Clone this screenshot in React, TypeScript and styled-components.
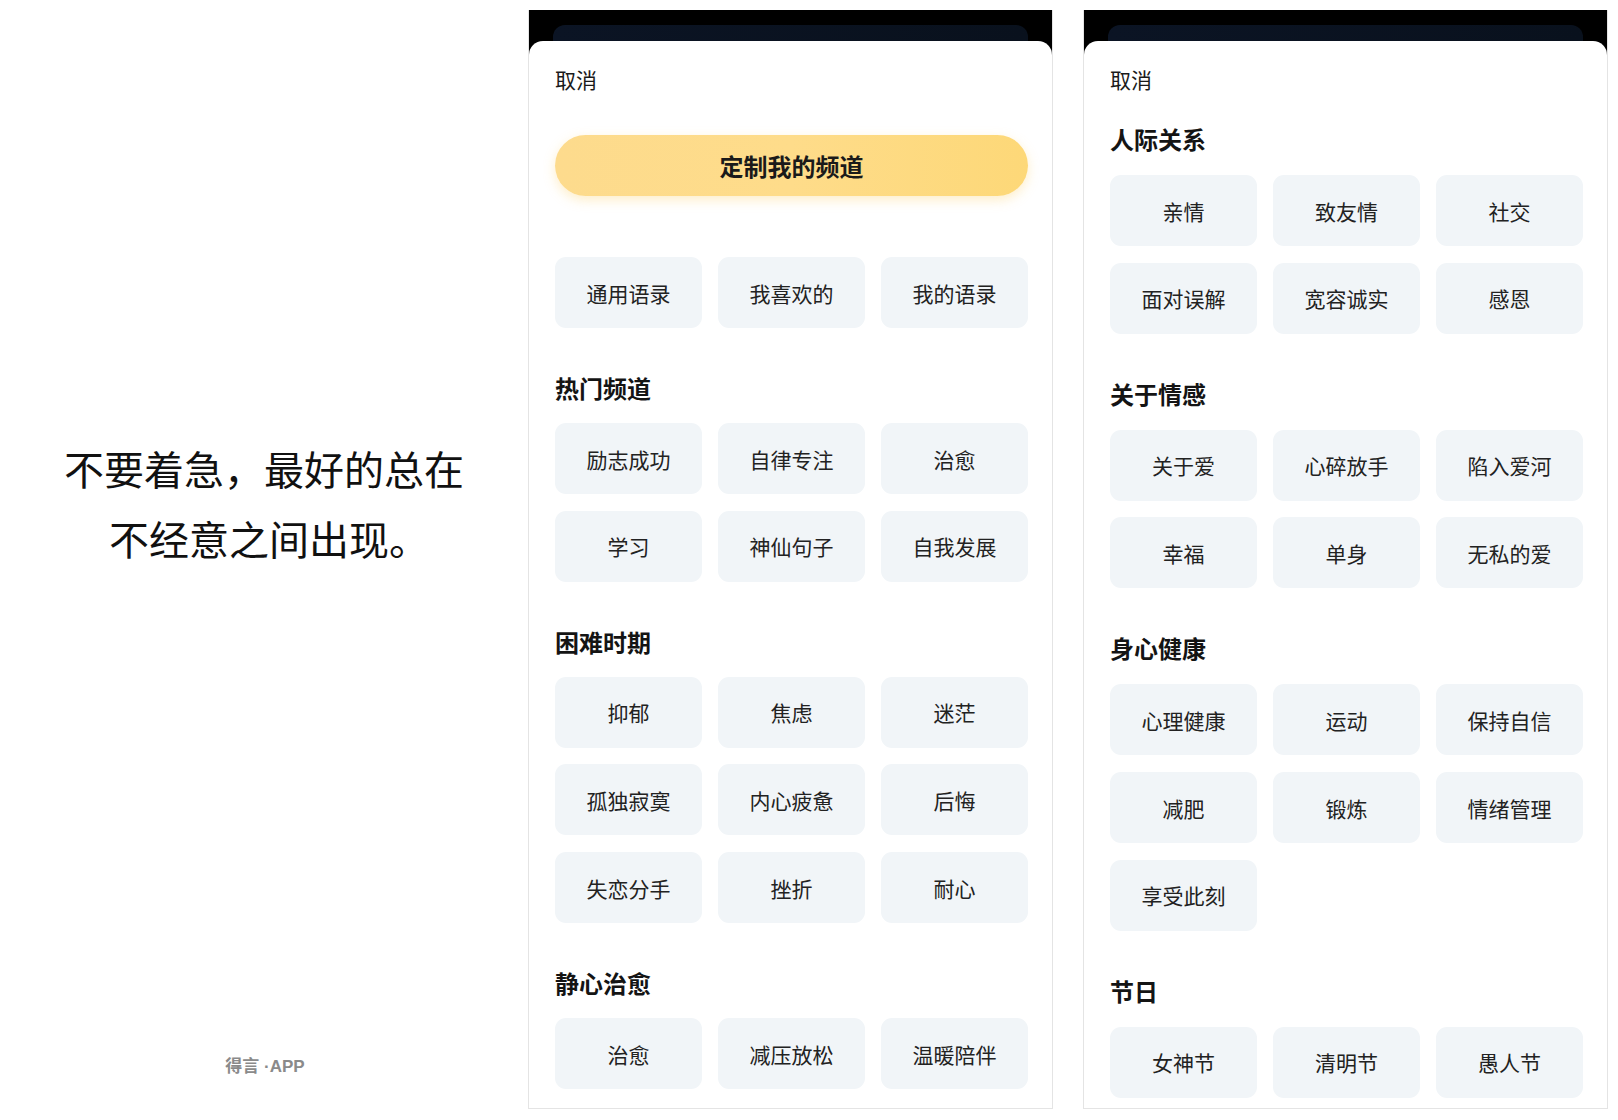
import React from 'react';
import styled, { createGlobalStyle } from 'styled-components';

const GlobalStyle = createGlobalStyle`
  html, body {
    margin: 0;
    padding: 0;
    background: #ffffff;
    font-family: "PingFang SC", "Noto Sans CJK SC", "Noto Sans", sans-serif;
    color: #1a1a1a;
  }
`;

type Section = { title: string; items: string[] };

const hotSections: Section[] = [
  { title: '热门频道', items: ['励志成功', '自律专注', '治愈', '学习', '神仙句子', '自我发展'] },
  { title: '困难时期', items: ['抑郁', '焦虑', '迷茫', '孤独寂寞', '内心疲惫', '后悔', '失恋分手', '挫折', '耐心'] },
  { title: '静心治愈', items: ['治愈', '减压放松', '温暖陪伴'] },
];

const moreSections: Section[] = [
  { title: '人际关系', items: ['亲情', '致友情', '社交', '面对误解', '宽容诚实', '感恩'] },
  { title: '关于情感', items: ['关于爱', '心碎放手', '陷入爱河', '幸福', '单身', '无私的爱'] },
  { title: '身心健康', items: ['心理健康', '运动', '保持自信', '减肥', '锻炼', '情绪管理', '享受此刻'] },
  { title: '节日', items: ['女神节', '清明节', '愚人节'] },
];

const App: React.FC = () => {
  return (
    <>
      <GlobalStyle />
      <Page>
        <Intro>
          <Quote>
            不要着急，最好的总在
            <br />
            <Shift>不经意之间出现。</Shift>
          </Quote>
          <Brand>得言 ·APP</Brand>
        </Intro>

        <Frame>
          <PeekCard />
          <Sheet>
            <Cancel>取消</Cancel>
            <CustomButton>定制我的频道</CustomButton>
            <ChipGrid $top={61}>
              <Chip>通用语录</Chip>
              <Chip>我喜欢的</Chip>
              <Chip>我的语录</Chip>
            </ChipGrid>
            {hotSections.map((s) => (
              <Group key={s.title} $top={45}>
                <GroupTitle>{s.title}</GroupTitle>
                <ChipGrid $top={20}>
                  {s.items.map((it, i) => (
                    <Chip key={i}>{it}</Chip>
                  ))}
                </ChipGrid>
              </Group>
            ))}
          </Sheet>
        </Frame>

        <Frame>
          <PeekCard />
          <Sheet>
            <Cancel>取消</Cancel>
            {moreSections.map((s, idx) => (
              <Group key={s.title} $top={idx === 0 ? 31 : 45}>
                <GroupTitle>{s.title}</GroupTitle>
                <ChipGrid $top={21}>
                  {s.items.map((it, i) => (
                    <Chip key={i}>{it}</Chip>
                  ))}
                </ChipGrid>
              </Group>
            ))}
          </Sheet>
        </Frame>
      </Page>
    </>
  );
};

export default App;

const Page = styled.div`
  display: flex;
  align-items: flex-start;
  width: 1618px;
  height: 1120px;
  overflow: hidden;
`;

const Intro = styled.div`
  width: 528px;
  height: 1120px;
  display: flex;
  flex-direction: column;
  align-items: center;
  padding-top: 433px;
  padding-bottom: 43px;
  box-sizing: border-box;
`;

const Quote = styled.div`
  font-size: 40px;
  line-height: 70px;
  color: #111111;
  text-align: center;
`;

const Shift = styled.span`
  padding-left: 10px;
`;

const Brand = styled.div`
  margin-top: auto;
  font-family: "Liberation Sans", "Noto Sans CJK SC", sans-serif;
  font-size: 17px;
  line-height: 20px;
  font-weight: 600;
  color: #8a8a8a;
  margin-left: 2px;
`;

const Frame = styled.div`
  width: 525px;
  height: 1099px;
  margin-top: 10px;
  margin-right: 30px;
  box-sizing: border-box;
  background: #000000;
  border: 1px solid #e4e4e4;
  border-top: none;
  padding-top: 15px;
  display: flex;
  flex-direction: column;
  overflow: hidden;

  &:last-child {
    margin-right: 0;
  }
`;

const PeekCard = styled.div`
  height: 16px;
  margin: 0 24px 0 24px;
  border-radius: 12px 12px 0 0;
  background: linear-gradient(90deg, #0b1424, #09111d);
  flex-shrink: 0;
`;

const Sheet = styled.div`
  flex: 1;
  background: #ffffff;
  border-radius: 14px 14px 0 0;
  padding: 25px 24px 0 26px;
  overflow: hidden;
`;

const Cancel = styled.div`
  font-size: 21px;
  line-height: 27px;
  color: #1a1a1a;
`;

const CustomButton = styled.div`
  margin-top: 42px;
  height: 61px;
  border-radius: 31px;
  background: linear-gradient(90deg, #fddb8d 0%, #fedc8a 50%, #fdd878 100%);
  box-shadow: 0 4px 12px rgba(252, 205, 100, 0.35);
  display: flex;
  align-items: center;
  justify-content: center;
  font-size: 24px;
  font-weight: 700;
  color: #1a1a1a;
`;

const Group = styled.div<{ $top: number }>`
  margin-top: ${({ $top }) => $top}px;
`;

const GroupTitle = styled.div`
  font-size: 24px;
  line-height: 30px;
  font-weight: 700;
  color: #141414;
`;

const ChipGrid = styled.div<{ $top: number }>`
  margin-top: ${({ $top }) => $top}px;
  display: grid;
  grid-template-columns: repeat(3, 147px);
  column-gap: 16px;
  row-gap: 16.7px;
`;

const Chip = styled.div`
  height: 71px;
  border-radius: 11px;
  background: #f1f5f8;
  display: flex;
  align-items: center;
  justify-content: center;
  font-size: 21px;
  color: #222222;
`;
